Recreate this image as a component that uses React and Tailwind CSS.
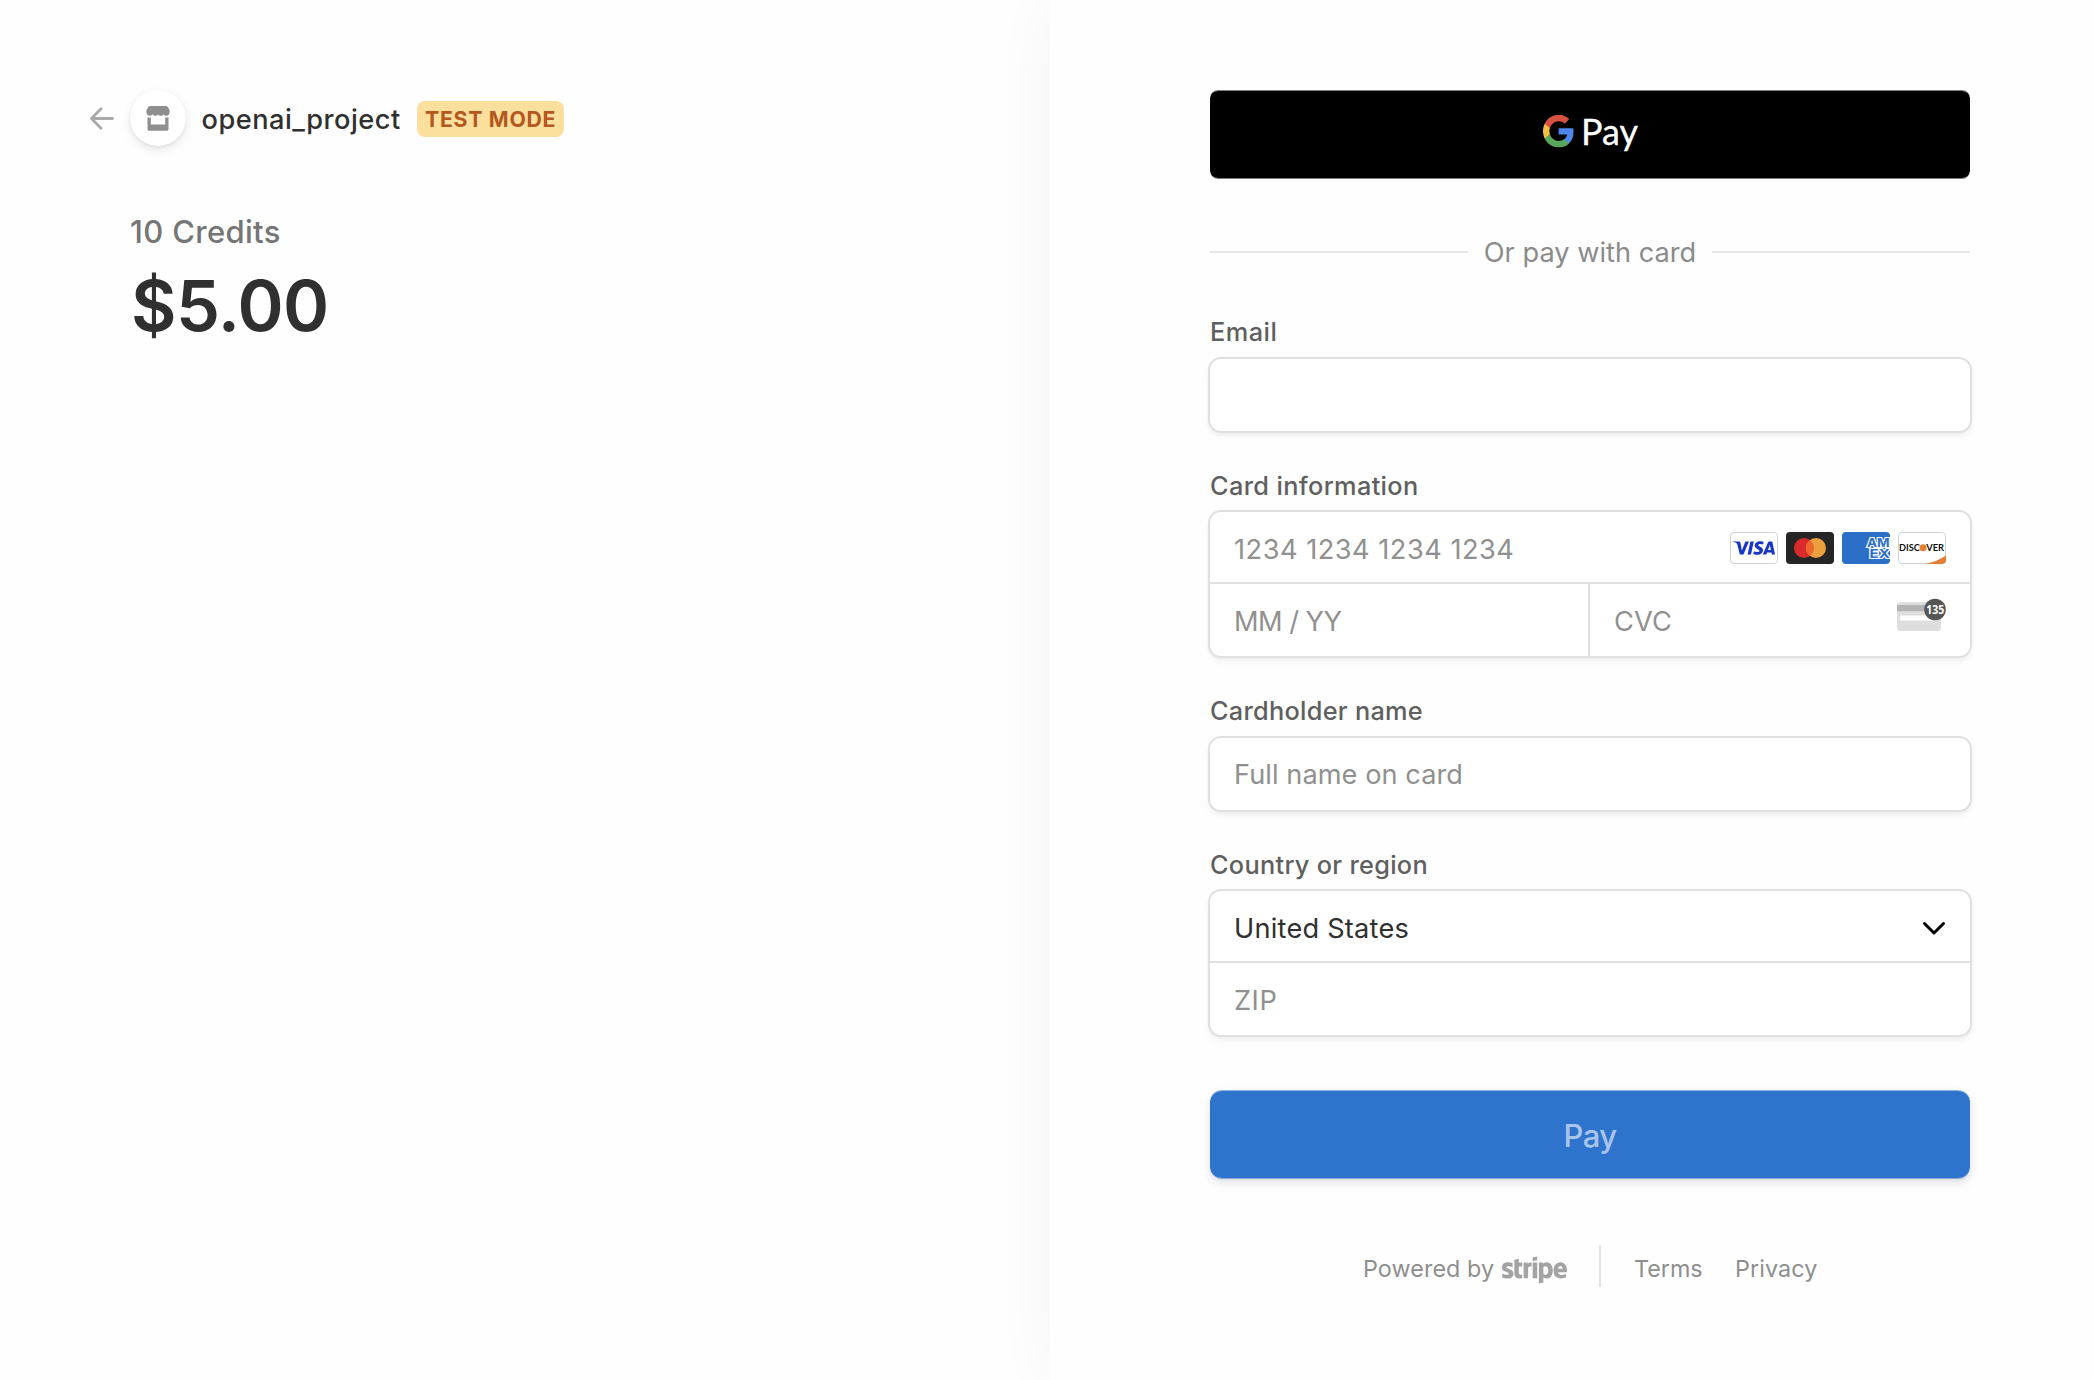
import { FaStripe } from "react-icons/fa6";
import { SiVisa } from "react-icons/si";

const FIELD =
  "rounded-[11px] bg-white shadow-[0_0_0_2px_#e0e0e0,0_4px_8px_rgba(0,0,0,0.07),0_2px_6px_rgba(0,0,0,0.04)]";

function BackArrow() {
  return (
    <svg width="24" height="24" viewBox="0 0 24 24" fill="none" stroke="#a9a9a9" strokeWidth="2.8" strokeLinecap="round" strokeLinejoin="round" className="shrink-0">
      <path d="M22.5 12.5H2M11 2.8L1.5 12.5L11 22.2" />
    </svg>
  );
}

function StoreIcon() {
  return (
    <svg width="24" height="25" viewBox="0 0 24 25" fill="#8f8f8f">
      <path d="M4.2 0H19.8C20.6 0 21.2.3 21.7 1L23.5 4C24.2 6.5 23 9.8 20.4 9.8C18.8 9.8 18 9 17.4 8.2C16.6 9.2 15.9 9.7 14.8 9.7C13.6 9.7 12.7 9.2 12 8.2C11.3 9.2 10.4 9.7 9.2 9.7C8.1 9.7 7.4 9.2 6.6 8.2C6 9 5.2 9.8 3.6 9.8C1 9.8-.2 6.5.5 4L2.3 1C2.8.3 3.4 0 4.2 0Z" />
      <path d="M1.5 11.4C2.7 11.7 3.8 11.7 4.8 11.3V18.6H19.2V11.3C20.2 11.7 21.3 11.7 22.5 11.4V22.9C22.5 24 21.8 24.7 20.7 24.7H3.3C2.2 24.7 1.5 24 1.5 22.9Z" />
    </svg>
  );
}

function GooglePayLogo() {
  return (
    <svg width="104" height="52" viewBox="-2 0 104 52" className="block">
      <svg x="3" y="4.8" width="30.7" height="32.6" viewBox="1 1 21.56 22" preserveAspectRatio="none">
        <path fill="#4f86ec" d="M22.56 12.25c0-.78-.07-1.53-.2-2.25H12v4.26h5.92c-.26 1.37-1.04 2.53-2.21 3.31v2.77h3.57c2.08-1.92 3.28-4.74 3.28-8.09z" />
        <path fill="#58a55c" d="M12 23c2.97 0 5.46-.98 7.28-2.66l-3.57-2.77c-.98.66-2.23 1.06-3.71 1.06-2.86 0-5.29-1.93-6.16-4.53H2.18v2.84C3.99 20.53 7.7 23 12 23z" />
        <path fill="#f2bd42" d="M5.84 14.09c-.22-.66-.35-1.36-.35-2.09s.13-1.43.35-2.09V7.07H2.18C1.43 8.55 1 10.22 1 12s.43 3.45 1.18 4.93l2.85-2.22.81-.62z" />
        <path fill="#d95140" d="M12 5.38c1.62 0 3.06.56 4.21 1.64l3.15-3.15C17.45 2.09 14.97 1 12 1 7.7 1 3.99 3.47 2.18 7.07l3.66 2.84c.87-2.6 3.3-4.53 6.16-4.53z" />
      </svg>
      <text x="41" y="34.9" textLength="57" lengthAdjust="spacingAndGlyphs" className="font-['Lato',sans-serif]" fontSize="37.5" fill="#fff" stroke="#fff" strokeWidth="0.3">Pay</text>
    </svg>
  );
}

function CardBrands() {
  return (
    <div className="mt-0.5 flex gap-2">
      <div className="flex h-8 w-12 items-center justify-center rounded-[4px] border border-[#d2d2d2] bg-white">
        <SiVisa size={42} color="#1a36c4" className="shrink-0" />
      </div>
      <svg width="48" height="32" viewBox="0 0 48 32">
        <rect width="48" height="32" rx="4" fill="#252525" />
        <circle cx="18" cy="16" r="10" fill="#d92b2b" />
        <circle cx="30" cy="16" r="10" fill="#eba040" />
        <path d="M24 8a10 10 0 0 1 0 16a10 10 0 0 1 0-16Z" fill="#ee672e" />
      </svg>
      <svg width="48" height="32" viewBox="0 0 48 32" className="overflow-hidden rounded-[4px]">
        <rect width="48" height="32" fill="#2c6fc9" />
        <g className="font-['Inter',sans-serif]" fontWeight="700" fontSize="12" fill="#2c6fc9" stroke="#fff" strokeWidth="2.2" paintOrder="stroke">
          <text x="25" y="15" textLength="22.6" lengthAdjust="spacingAndGlyphs">AM</text>
          <text x="27.6" y="26.2" textLength="20.2" lengthAdjust="spacingAndGlyphs">EX</text>
        </g>
      </svg>
      <svg width="48" height="32" viewBox="0 0 48 32">
        <rect x=".5" y=".5" width="47" height="31" rx="3.5" fill="#fff" stroke="#d2d2d2" />
        <path d="M27 32C35 30.5 42 27.5 48 23.5V28a4 4 0 0 1-4 4Z" fill="#e47f34" />
        <g className="font-['Lato',sans-serif]" fontWeight="700" fontSize="9.6" fill="#111">
          <text x="1" y="19.2" textLength="20.8" lengthAdjust="spacingAndGlyphs">DISC</text>
          <text x="28.3" y="19.2" textLength="17.8" lengthAdjust="spacingAndGlyphs">VER</text>
        </g>
        <circle cx="25" cy="15.8" r="3.5" fill="#e47f34" />
      </svg>
    </div>
  );
}

function CvcIcon() {
  return (
    <svg width="49" height="34" viewBox="0 0 49 34">
      <rect x="0" y="4" width="44" height="29" rx="3.5" fill="#dedede" />
      <rect x="0" y="7" width="44" height="6.2" fill="#b3b3b3" />
      <rect x="3" y="17.6" width="38" height="5" rx="1" fill="#fff" />
      <circle cx="38" cy="11.5" r="10.8" fill="#565656" />
      <text x="38.2" y="16" textAnchor="middle" textLength="18" lengthAdjust="spacingAndGlyphs" className="font-['Open_Sans',sans-serif]" fontSize="12.5" fontWeight="700" fill="#fff">135</text>
    </svg>
  );
}

function Label({ children, className }) {
  return <div className={"h-8 text-[25.3px] leading-8 font-medium text-[#5f5f5f] " + className}>{children}</div>;
}

function Placeholder({ children, className }) {
  return <span className={"text-[27.2px] leading-9 " + className}>{children}</span>;
}

export default function App() {
  return (
    <div className="flex h-[1380px] w-[2094px] overflow-hidden bg-[#fefefe] font-['Inter',sans-serif] whitespace-nowrap">
      <section className="w-[1050px] shrink-0 pt-[90px] pl-[90px]">
        <div className="flex h-14 items-center">
          <BackArrow />
          <div className="ml-4 flex size-14 shrink-0 items-center justify-center rounded-full bg-white shadow-[0_4px_10px_rgba(60,66,87,0.13),0_1px_3px_rgba(0,0,0,0.06)]">
            <StoreIcon />
          </div>
          <div className="mt-1 w-[231px] pl-[15.5px] text-[27.2px] font-medium tracking-[0.49px] text-[#303030]">openai_project</div>
          <div className="mt-0.5 h-9 w-[147px] rounded-lg bg-[#fbdf9d] pl-2 text-[21.3px] leading-9 font-bold tracking-[0.7px] text-[#b4581f]">TEST MODE</div>
        </div>
        <div className="mt-[66px] ml-10 h-10 text-[31px] leading-10 font-[450] tracking-[0.33px] text-[#757575]">10 Credits</div>
        <div className="mt-[18px] ml-[41px] h-[72px] text-[70px] leading-[72px] font-semibold tracking-[-0.6px] text-[#303030]">$5.00</div>
      </section>

      <main className="flex w-[1044px] shrink-0 flex-col bg-[#fefefe] pt-[90px] pl-40 shadow-[0_0_60px_rgba(0,0,0,0.045)]">
        <button className="flex h-[89px] w-[760px] shrink-0 justify-center rounded-lg border-y border-black/50 bg-black bg-clip-padding pt-[19px]">
          <GooglePayLogo />
        </button>

        <div className="mt-[58px] flex h-[30px] w-[760px] items-center justify-between">
          <div className="h-0.5 w-[258px] bg-[#e8e8e8]" />
          <span className="mt-0.5 text-[27.2px] leading-[30px] text-[#8b8b8b]">Or pay with card</span>
          <div className="h-0.5 w-[258px] bg-[#e8e8e8]" />
        </div>

        <Label className="mt-[49px] tracking-[0.5px]">Email</Label>
        <div className={"mt-[11px] h-[72px] w-[760px] " + FIELD} />

        <Label className="mt-[39px] tracking-[0.36px]">Card information</Label>
        <div className={"mt-[10px] h-[144px] w-[760px] " + FIELD}>
          <div className="flex h-[72px] items-center justify-between border-b-2 border-[#e0e0e0] pr-6 pl-6">
            <Placeholder className="mt-1.5 tracking-[0.5px] text-[#909090]">1234 1234 1234 1234</Placeholder>
            <CardBrands />
          </div>
          <div className="flex h-[72px]">
            <div className="flex w-[380px] items-center border-r-2 border-[#e0e0e0] pl-6">
              <Placeholder className="mt-1 tracking-[-0.53px] text-[#909090]">MM / YY</Placeholder>
            </div>
            <div className="flex flex-1 items-center justify-between pr-6 pl-6">
              <Placeholder className="mt-1 tracking-[0.2px] text-[#909090]">CVC</Placeholder>
              <div className="-mt-2.5">
                <CvcIcon />
              </div>
            </div>
          </div>
        </div>

        <Label className="mt-[39px] tracking-[0.29px]">Cardholder name</Label>
        <div className={"mt-[11px] flex h-[72px] w-[760px] items-center pl-6 " + FIELD}>
          <Placeholder className="mt-0.5 tracking-[0.05px] text-[#909090]">Full name on card</Placeholder>
        </div>

        <Label className="mt-[39px] tracking-[0.3px]">Country or region</Label>
        <div className={"mt-[10px] h-[144px] w-[760px] " + FIELD}>
          <div className="flex h-[72px] items-center justify-between border-b-2 border-[#e0e0e0] pr-6 pl-6">
            <Placeholder className="mt-1.5 tracking-[0.22px] text-[#303030]">United States</Placeholder>
            <svg width="24" height="16" viewBox="0 0 24 16" fill="none" stroke="#000" strokeWidth="3" strokeLinecap="round" strokeLinejoin="round" className="mt-1.5">
              <path d="M2.5 2.5L12 12L21.5 2.5" />
            </svg>
          </div>
          <div className="flex h-[72px] items-center pl-6">
            <Placeholder className="mt-1 tracking-[0.5px] text-[#909090]">ZIP</Placeholder>
          </div>
        </div>

        <button className="mt-[55px] h-[89px] w-[760px] shrink-0 rounded-[12px] border-y border-[#2e74cd]/50 bg-[#2e74cd] bg-clip-padding pt-[3px] text-[31px] leading-[84px] font-[450] tracking-[-0.5px] text-[#a9c5eb] shadow-[0_4px_10px_rgba(60,66,87,0.14),0_1px_3px_rgba(0,0,0,0.05)]">
          Pay
        </button>

        <footer className="mt-[65px] ml-[153px] flex h-[43px] items-center text-[23.3px] text-[#8e8e8e]">
          <span className="mt-2 w-[139px] tracking-[0.1px]">Powered by</span>
          <FaStripe className="mt-[9px] h-[52px] w-[65px] text-[#a3a3a3]" />
          <div className="ml-8 h-[42px] w-0.5 bg-[#e3e3e3]" />
          <span className="mt-2 ml-[33px] w-[101px]">Terms</span>
          <span className="mt-2 tracking-[0.1px]">Privacy</span>
        </footer>
      </main>
    </div>
  );
}
